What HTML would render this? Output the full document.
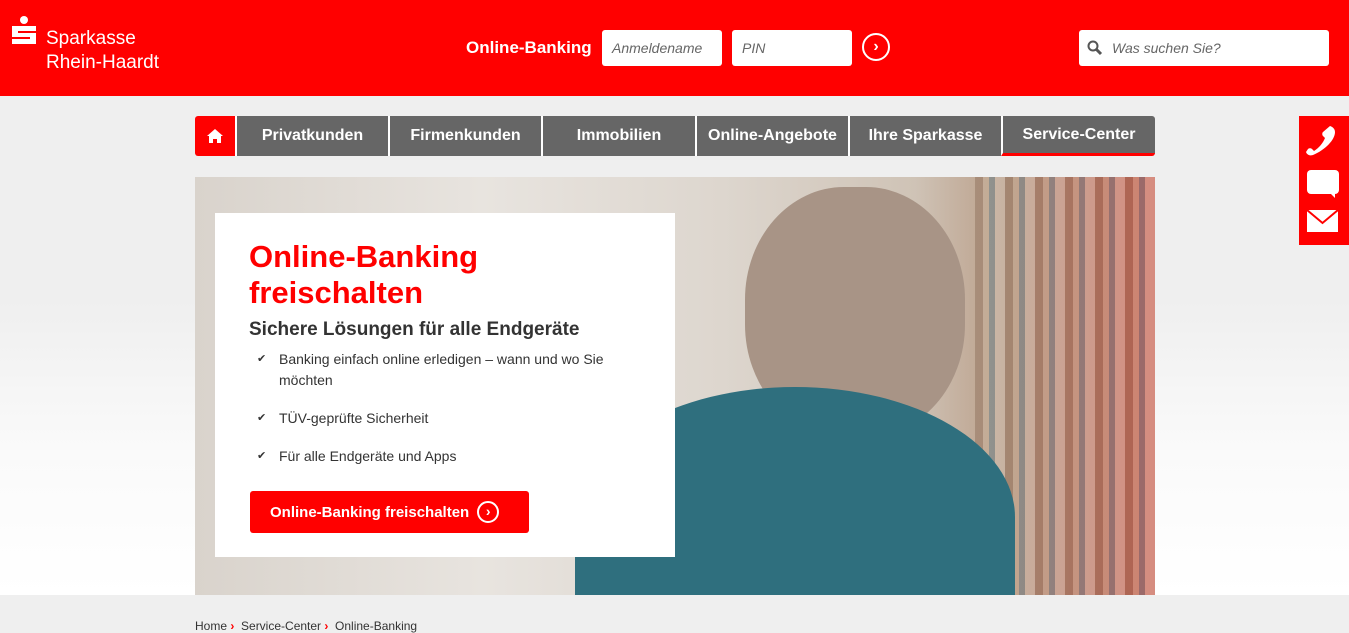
<!DOCTYPE html>
<html><head><meta charset="utf-8"><style>
*{margin:0;padding:0;box-sizing:border-box}
body{width:1349px;height:632px;overflow:hidden;background:linear-gradient(#efefef 0,#efefef 300px,#fafafa 450px,#fff 595px,#efefef 595px);font-family:"Liberation Sans",sans-serif;position:relative}
.top{position:absolute;left:0;top:0;width:1349px;height:96px;background:#ff0000}
.logo{position:absolute;left:46px;top:27px;color:#fff;font-size:19px;line-height:24px}
.inp{position:absolute;top:30px;height:36px;background:#fff;border-radius:3px;font-style:italic;color:#666;font-size:14px;padding:10px}
.nav{position:absolute;left:195px;top:116px;width:960px;height:40px;display:flex}
.nav div{background:#666;color:#fff;font-weight:bold;font-size:16px;display:flex;align-items:center;justify-content:center;border-left:2px solid #fff}
.hero{position:absolute;left:195px;top:177px;width:960px;height:418px;overflow:hidden;
background:linear-gradient(90deg,#d9d3cc 0%,#e8e4df 30%,#ddd6ce 55%,#cfc3b6 75%,#b99c86 85%,#c66a5a 95%,#d4584a 100%)}
.card{position:absolute;left:20px;top:36px;width:460px;height:344px;background:#fff;padding:26px 34px}
h1{color:#f00;font-size:31px;line-height:36px;font-weight:bold}
h2{font-size:19px;color:#333;margin-top:8px;font-weight:bold}
li{list-style:none;font-size:14px;color:#333;line-height:21px;padding-left:30px;position:relative;margin-top:8px}
li:before{content:"✔";position:absolute;left:8px;font-size:11px}
.btn{position:absolute;left:35px;top:278px;width:279px;height:42px;background:#f00;border-radius:3px;color:#fff;font-weight:bold;font-size:15px;display:flex;align-items:center;padding-left:20px}
.circ{display:inline-block;width:22px;height:22px;border:2px solid #fff;border-radius:50%;margin-left:8px;text-align:center;line-height:17px;font-size:14px}
</style></head><body>
<div class="top">
<svg style="position:absolute;left:12px;top:16px" width="24" height="32" viewBox="0 0 24 32"><circle cx="12" cy="4" r="4" fill="#fff"/><path d="M0 10h24v5H6v2h18v11H0v-5h18v-2H0z" fill="#fff"/></svg>
<div class="logo">Sparkasse<br>Rhein-Haardt</div>
<div style="position:absolute;left:466px;top:38px;color:#fff;font-weight:bold;font-size:17px">Online-Banking</div>
<div class="inp" style="left:602px;width:120px">Anmeldename</div>
<div class="inp" style="left:732px;width:120px">PIN</div>
<div style="position:absolute;left:862px;top:33px;width:28px;height:28px;border:2px solid #fff;border-radius:50%;color:#fff;text-align:center;line-height:23px;font-weight:bold">›</div>
<div class="inp" style="left:1079px;width:250px;padding-left:33px">Was suchen Sie?</div>
<svg style="position:absolute;left:1087px;top:40px" width="16" height="16"><circle cx="6" cy="6" r="4.5" stroke="#555" stroke-width="2" fill="none"/><path d="M9 9l5 5" stroke="#555" stroke-width="3"/></svg>
</div>
<div class="nav">
<div style="width:40px;background:#f00;border:0;border-radius:3px 0 0 3px"><svg width="18" height="16"><path d="M9 1L1 8h2v7h4v-4h4v4h4V8h2z" fill="#fff"/></svg></div>
<div style="width:153px">Privatkunden</div><div style="width:153px">Firmenkunden</div><div style="width:154px">Immobilien</div><div style="width:153px">Online-Angebote</div><div style="width:153px">Ihre Sparkasse</div><div style="width:154px;border-bottom:3px solid #f00;border-radius:0 3px 3px 0">Service-Center</div>
</div>
<div style="position:absolute;left:1299px;top:116px;width:50px;height:129px;background:#f00">
<svg width="50" height="129"><path d="M31 10c3 1 5 3 5 6c0 8-10 18-22 23c-3 1-6 0-7-3l2-3c1-1 3-1 4 0l2 2c5-3 9-8 11-13l-2-2c-1-1-1-3 0-4z" fill="#fff"/><rect x="8" y="54" width="32" height="24" rx="4" fill="#fff"/><path d="M30 76l6 6v-6z" fill="#fff"/><rect x="8" y="94" width="31" height="22" fill="#fff"/><path d="M8 94l15.5 13L39 94" stroke="#f00" stroke-width="2" fill="none"/></svg></div>
<div class="hero">
<div style="position:absolute;left:780px;top:0;width:180px;height:418px;background:repeating-linear-gradient(90deg,#8a6a55 0 8px,#c9b39c 8px 14px,#5a7a8a 14px 20px,#d9ccc0 20px 30px);opacity:.45"></div>
<div style="position:absolute;left:550px;top:10px;width:220px;height:250px;border-radius:45%;background:#a89486"></div>
<div style="position:absolute;left:380px;top:210px;width:440px;height:260px;border-radius:50% 50% 0 0;background:#2f6f7e"></div>
<div class="card">
<h1>Online-Banking<br>freischalten</h1>
<h2>Sichere Lösungen für alle Endgeräte</h2>
<ul style="margin-top:4px"><li>Banking einfach online erledigen – wann und wo Sie möchten</li><li style="margin-top:17px">TÜV-geprüfte Sicherheit</li><li style="margin-top:17px">Für alle Endgeräte und Apps</li></ul>
<div class="btn">Online-Banking freischalten <span class="circ">›</span></div>
</div></div>
<div style="position:absolute;left:195px;top:619px;font-size:12px;color:#333">Home <b style="color:#f00">›</b>&nbsp; Service-Center <b style="color:#f00">›</b>&nbsp; Online-Banking</div>
</body></html>
